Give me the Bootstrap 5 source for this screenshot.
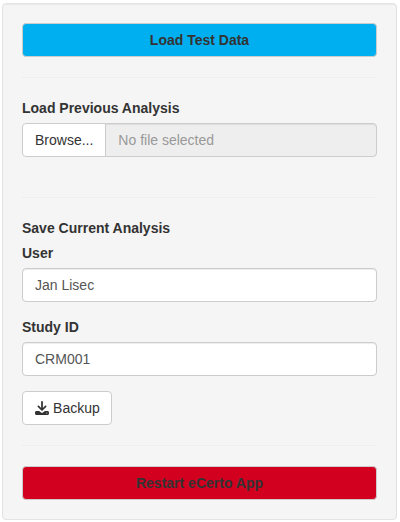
<!DOCTYPE html>
<html lang="en">
<head>
<meta charset="utf-8">
<meta name="viewport" content="width=device-width, initial-scale=1">
<title>eCerto</title>
<link href="https://cdn.jsdelivr.net/npm/bootstrap@5.3.0/dist/css/bootstrap.min.css" rel="stylesheet">
<style>
body { font: 14px/20px "Liberation Sans", Arial, sans-serif; color: #333; background: #fff; padding: 3px 3px 2px 2px; }
.side-panel { background: #f5f5f5; border: 1px solid #e3e3e3; border-radius: 4px; padding: 19px; box-shadow: inset 0 1px 1px rgba(0,0,0,.05); }
.side-panel hr { margin: 20px 0; border-top: 1px solid #eee; opacity: 1; }
.side-panel .form-label { display: block; margin-bottom: 5px; font-weight: 700; line-height: 20px; }
.side-panel .btn { --bs-btn-color: #333; --bs-btn-bg: #fff; --bs-btn-border-color: #ccc; --bs-btn-hover-color: #333; --bs-btn-hover-bg: #e6e6e6; --bs-btn-hover-border-color: #adadad; font-size: 14px; line-height: 20px; padding: 6px 12px; border-radius: 4px; }
.side-panel .btn-test { --bs-btn-bg: #00aff0; --bs-btn-hover-bg: #00aff0; }
.side-panel .btn-restart { --bs-btn-bg: #d2001e; --bs-btn-hover-bg: #d2001e; }
.side-panel .btn-backup { width: 90px; padding-right: 11px; white-space: nowrap; }
.side-panel .form-control { height: 34px; font-size: 14px; line-height: 20px; padding: 6px 12px; color: #555; border-color: #ccc; border-radius: 4px; box-shadow: inset 0 1px 1px rgba(0,0,0,.075); }
.side-panel .input-group > .btn { border-radius: 4px 0 0 4px; }
.side-panel .input-group > .form-control { background: #eee; border-radius: 0 4px 4px 0; }
.side-panel .form-control::placeholder { color: #999; }
.upload-row { margin-bottom: 40px; }
.field { margin-bottom: 15px; }
.icon-save { width: 14px; height: 14px; vertical-align: -2px; }
</style>
<script src="https://cdn.jsdelivr.net/npm/bootstrap@5.3.0/dist/js/bootstrap.bundle.min.js"></script>
</head>
<body>
<form class="side-panel">
  <button type="button" class="btn btn-test d-block w-100 fw-bold">Load Test Data</button>
  <hr>
  <label class="form-label" for="file">Load Previous Analysis</label>
  <div class="input-group upload-row">
    <button type="button" class="btn">Browse...</button>
    <input id="file" class="form-control" placeholder="No file selected" readonly>
  </div>
  <hr>
  <div class="form-label">Save Current Analysis</div>
  <div class="field">
    <label class="form-label" for="user">User</label>
    <input id="user" class="form-control" value="Jan Lisec">
  </div>
  <div class="field">
    <label class="form-label" for="study">Study ID</label>
    <input id="study" class="form-control" value="CRM001">
  </div>
  <button type="button" class="btn btn-backup"><svg class="icon-save" viewBox="0 0 14 14" fill="none" stroke="currentColor" aria-hidden="true"><path d="M7 .9v7.6M3.4 5.4 7 9l3.6-3.6" stroke-width="1.75" stroke-linecap="round" stroke-linejoin="round"/><path fill="currentColor" stroke="none" fill-rule="evenodd" d="M1.500 10h2.650l1.600 1.200a2 2 0 0 0 2.500 0l1.600-1.200h2.650C13.400 10 14 10.700 14 11.500v.9C14 13.300 13.300 13.900 12.500 13.900H1.500C.7 13.900 0 13.300 0 12.400v-.9C0 10.700.6 10 1.500 10zM11.800 11.500a.5.5 0 1 0 0 1 .5.5 0 0 0 0-1z"/></svg> Backup</button>
  <hr>
  <button type="button" class="btn btn-restart d-block w-100 fw-bold">Restart eCerto App</button>
</form>
</body>
</html>
